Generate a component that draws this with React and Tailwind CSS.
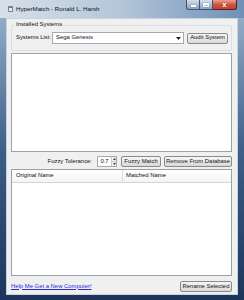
import React from "react";

const font = { fontFamily: '"Liberation Sans", Arial, sans-serif' };

function Btn({ children, className = "" }) {
  return (
    <div
      className={
        "flex h-[11px] items-center justify-center rounded-[2px] border border-[#8a8a8a] bg-gradient-to-b from-[#f6f6f6] via-[#e9e9e9] to-[#d8d8d8] text-[5.9px] leading-none text-[#111] " +
        className
      }
    >
      {children}
    </div>
  );
}

export default function App() {
  return (
    <div
      className="relative flex h-[300px] w-[244px] flex-col overflow-hidden bg-gradient-to-b from-[#9fb6cf] via-[#3d5f88] to-[#1d355a]"
      style={font}
    >
      {/* title bar */}
      <div className="flex h-[18px] shrink-0 items-center bg-gradient-to-r from-[#d6e0ea] via-[#b4c6d9] to-[#6f90b6] pl-[8px]">
        <div className="mr-[3px] h-[6px] w-[5px] border border-[#7d8894] bg-[#e7ecf1]">
          <div className="h-[1px] bg-[#5d7aa0]" />
        </div>
        <span className="text-[6.2px] leading-none text-[#111]">HyperMatch - Ronald L. Harsh</span>
      </div>

      {/* caption buttons */}
      <div className="absolute right-[7px] top-0 flex h-[10px]">
        <div className="flex w-[14px] items-center justify-center rounded-bl-[3px] border border-t-0 border-[#3d5575] bg-gradient-to-b from-[#d4dfeb] to-[#8aa3c0]">
          <div className="mt-[3px] h-[1.5px] w-[5px] bg-white shadow-[0_0_1px_#333]" />
        </div>
        <div className="flex w-[13px] items-center justify-center border border-l-0 border-t-0 border-[#3d5575] bg-gradient-to-b from-[#d4dfeb] to-[#8aa3c0]">
          <div className="h-[4px] w-[6px] border border-t-2 border-white shadow-[0_0_1px_#333]" />
        </div>
        <div className="flex w-[24px] items-center justify-center rounded-br-[3px] border border-l-0 border-t-0 border-[#5a2020] bg-gradient-to-b from-[#e8a093] via-[#d0543f] to-[#c2402b]">
          <span className="text-[7px] font-bold leading-none text-white">x</span>
        </div>
      </div>

      {/* client area */}
      <div className="ml-[6px] mr-[6px] flex flex-1 flex-col border border-[#c9d3dd] bg-[#f0f0f0] pl-[4px] pr-[5px]">
        {/* group box */}
        <div className="relative mt-[6px] h-[26px] rounded-[2px] border border-[#d5dfe5]">
          <span className="absolute left-[3px] top-[-4px] bg-[#f0f0f0] px-[1px] text-[5.9px] leading-none text-[#111]">
            Installed Systems
          </span>
          <div className="mt-[6px] flex items-center pl-[4px]">
            <span className="w-[36px] text-[5.9px] leading-none text-[#111]">Systems List:</span>
            <div className="flex h-[12px] w-[132px] items-center justify-between border border-[#a4a9b0] bg-white pl-[3px] pr-[2px]">
              <span className="text-[5.9px] leading-none text-[#111]">Sega Genesis</span>
              <svg width="5" height="3" viewBox="0 0 5 3">
                <path d="M0 0h5L2.5 3z" fill="#222" />
              </svg>
            </div>
            <Btn className="ml-[3px] w-[41px]">Audit System</Btn>
          </div>
        </div>

        {/* listbox */}
        <div className="mt-[2px] h-[99px] border border-[#9aa1a8] bg-white" />

        {/* fuzzy row */}
        <div className="mt-[4px] flex items-center justify-end">
          <span className="text-[5.9px] leading-none text-[#111]">Fuzzy Tolerance:</span>
          <div className="ml-[5px] flex h-[11px] w-[20px] items-center border border-[#a4a9b0] bg-white">
            <span className="flex-1 text-center text-[5.9px] leading-none text-[#111]">0.7</span>
            <div className="flex h-full w-[5px] flex-col border-l border-[#c8ccd0] bg-[#eceff2]">
              <div className="flex flex-1 items-center justify-center">
                <svg width="3" height="2" viewBox="0 0 3 2"><path d="M0 2h3L1.5 0z" fill="#444" /></svg>
              </div>
              <div className="flex flex-1 items-center justify-center border-t border-[#c8ccd0]">
                <svg width="3" height="2" viewBox="0 0 3 2"><path d="M0 0h3L1.5 2z" fill="#444" /></svg>
              </div>
            </div>
          </div>
          <Btn className="ml-[4px] w-[40px]">Fuzzy Match</Btn>
          <Btn className="ml-[3px] w-[68px]">Remove From Database</Btn>
        </div>

        {/* listview */}
        <div className="mt-[2px] flex h-[107px] flex-col border border-[#9aa1a8] bg-white">
          <div className="flex h-[13px] border-b border-[#d5d5d5] bg-gradient-to-b from-white to-[#f3f4f6]">
            <div className="flex w-[111px] items-center border-r border-[#dcdcdc] pl-[4px] text-[5.9px] leading-none text-[#111]">
              Original Name
            </div>
            <div className="flex items-center pl-[3px] text-[5.9px] leading-none text-[#111]">Matched Name</div>
          </div>
        </div>

        {/* bottom row */}
        <div className="mt-[5px] flex items-center justify-between">
          <span className="text-[5.9px] leading-none text-[#2a2ad8] underline">Help Me Get a New Computer!</span>
          <Btn className="w-[52px]">Rename Selected</Btn>
        </div>
      </div>
      <div className="h-[5px] shrink-0" />
    </div>
  );
}
